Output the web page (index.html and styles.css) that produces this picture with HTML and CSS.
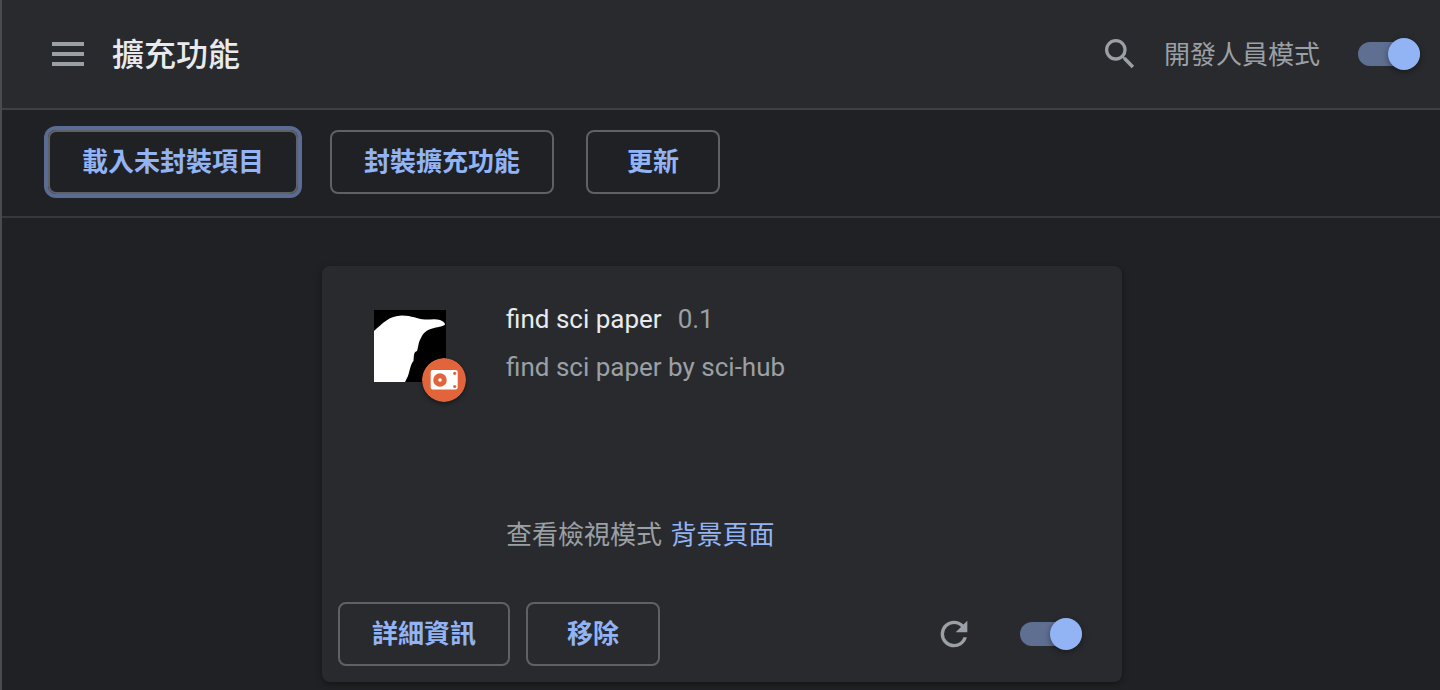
FILE: index.html
```
<!DOCTYPE html>
<html lang="zh-Hant">
<head>
    <meta charset="UTF-8">
    <meta name="viewport" content="width=device-width, initial-scale=1.0">
    <title>擴充功能</title>
    <link rel="stylesheet" href="styles.css">
</head>
<body>

<header class="header">
    <button type="button" class="icon-button" aria-label="主選單">
        <svg class="menu-icon" viewBox="0 0 32 24"><path d="M0 0h32v4H0zM0 10h32v4H0zM0 20h32v4H0z"/></svg>
    </button>
    <h1>擴充功能</h1>
    <button type="button" class="icon-button search" aria-label="搜尋">
        <svg class="icon" viewBox="0 0 24 24"><path d="M15.5 14h-.79l-.28-.27A6.471 6.471 0 0 0 16 9.5 6.5 6.5 0 1 0 9.5 16c1.61 0 3.09-.59 4.23-1.57l.27.28v.79l5 4.99L20.49 19l-4.99-5zm-6 0C7.01 14 5 11.99 5 9.5S7.01 5 9.5 5 14 7.01 14 9.5 11.99 14 9.5 14z"/></svg>
    </button>
    <label class="dev-label" for="devMode">開發人員模式</label>
    <input type="checkbox" class="toggle" id="devMode" checked>
</header>

<div class="toolbar">
    <button type="button" class="button focused">載入未封裝項目</button>
    <button type="button" class="button">封裝擴充功能</button>
    <button type="button" class="button">更新</button>
</div>

<main class="content">
    <section class="card">
        <div class="card-main">
            <div class="logo">
                <svg class="logo-image" viewBox="0 0 72 72">
                    <rect width="72" height="72" fill="#000"/>
                    <path fill="#fff" d="M0 21C8 14 15 5.500 28 5.500C38 5.500 43 9 51 9.500C57 9.500 62 8.500 66 10C69 11 71 13 71 14.500C70 16 65 17 60 18C53 19.500 49 23 47 28C44 33 44.500 37 43 41C40 42 40 44 39.500 51C36 55 36 61 34 66L31 72H0z"/>
                </svg>
                <svg class="badge" viewBox="0 0 44 44">
                    <circle cx="22" cy="22" r="22" fill="#e2643b"/>
                    <rect x="8.700" y="12" width="27" height="19.500" rx="2" fill="#fff"/>
                    <circle cx="18" cy="22" r="4.300" fill="none" stroke="#e2643b" stroke-width="5"/>
                    <circle cx="32.700" cy="15.300" r="1.600" fill="#e2643b"/>
                    <circle cx="32.700" cy="28.500" r="1.600" fill="#e2643b"/>
                </svg>
            </div>
            <div class="info">
                <div class="title-row">
                    <h2>find sci paper</h2>
                    <span>0.1</span>
                </div>
                <p class="description">find sci paper by sci-hub</p>
                <p class="inspect">查看檢視模式 <a href="#">背景頁面</a></p>
            </div>
        </div>
        <div class="card-actions">
            <button type="button" class="button">詳細資訊</button>
            <button type="button" class="button">移除</button>
            <button type="button" class="icon-button reload" aria-label="重新載入">
                <svg class="icon" viewBox="0 0 24 24"><path d="M17.65 6.350A7.958 7.958 0 0 0 12 4a8 8 0 1 0 7.730 10h-2.080A5.990 5.990 0 0 1 12 18a6 6 0 1 1 0-12c1.660 0 3.140.690 4.220 1.780L13 11h7V4z"/></svg>
            </button>
            <input type="checkbox" class="toggle" aria-label="啟用" checked>
        </div>
    </section>
</main>

</body>
</html>
```
FILE: styles.css
```
* {
    box-sizing: border-box;
}
body {
    font-family: Roboto, "Noto Sans CJK TC", sans-serif;
    font-size: 26px;
    line-height: 40px;
    background-color: #202124;
    color: #9aa0a6;
    margin: 0;
    min-height: 100vh;
    border-left: 2px solid #4a4b4e;
}
h1, h2, p {
    margin: 0;
}
h1 {
    font-size: 32px;
    font-weight: 500;
    color: #e8eaed;
    margin-left: 28px;
    padding-top: 2px;
}
h2 {
    font-size: 26px;
    font-weight: 400;
    color: #e8eaed;
}
.header {
    display: flex;
    align-items: center;
    height: 110px;
    padding: 0 20px 0 50px;
    background-color: #292a2d;
    border-bottom: 2px solid #3f4042;
}
.icon-button {
    display: flex;
    padding: 0;
    border: none;
    background: none;
    color: #9aa0a6;
    cursor: pointer;
}
.icon-button svg {
    fill: currentColor;
}
.menu-icon {
    width: 32px;
    height: 24px;
}
.icon {
    width: 40px;
    height: 40px;
}
.search {
    margin-left: auto;
}
.dev-label {
    margin: 0 38px 0 24px;
    padding-top: 2px;
}
.toggle {
    appearance: none;
    display: flex;
    align-items: center;
    justify-content: flex-end;
    width: 62px;
    height: 24px;
    margin: 0;
    border-radius: 12px;
    background-color: #5f6f92;
    cursor: pointer;
}
.toggle::before {
    content: "";
    width: 32px;
    height: 32px;
    flex: none;
    border-radius: 50%;
    background-color: #92b4f4;
    box-shadow: 0 2px 6px rgba(0, 0, 0, 0.4);
}
.toggle:not(:checked) {
    justify-content: flex-start;
}
.toolbar {
    display: flex;
    gap: 32px;
    padding: 20px 46px 22px;
    border-bottom: 2px solid #37383b;
}
.button {
    height: 64px;
    min-width: 134px;
    padding: 0 32px 6px;
    border: 2px solid #5f6164;
    border-radius: 8px;
    background: none;
    color: #92b4f4;
    font-family: inherit;
    font-size: 26px;
    font-weight: 700;
    cursor: pointer;
}
.focused {
    box-shadow: 0 0 0 4px #5a6c93;
}
.content {
    display: flex;
    justify-content: center;
    padding: 48px 0 8px 2px;
}
.card {
    width: 800px;
    padding: 32px 40px 16px 16px;
    border-radius: 8px;
    background-color: #292a2d;
    box-shadow: 0 2px 6px rgba(0, 0, 0, 0.4);
}
.card-main {
    display: flex;
    gap: 60px;
    padding-left: 36px;
}
.logo {
    position: relative;
    width: 72px;
    height: 72px;
    margin-top: 12px;
}
.logo-image {
    display: block;
}
.badge {
    position: absolute;
    right: -20px;
    bottom: -20px;
    width: 44px;
    height: 44px;
    border-radius: 50%;
    box-shadow: 0 2px 4px rgba(0, 0, 0, 0.4);
}
.info {
    padding-top: 1px;
}
.title-row {
    display: flex;
    gap: 16px;
}
.description {
    min-height: 168px;
    margin-top: 8px;
}
.inspect a {
    margin-left: 2px;
    color: #92b4f4;
    text-decoration: none;
}
.card-actions {
    display: flex;
    align-items: center;
    gap: 16px;
    margin-top: 47px;
}
.reload {
    margin: 0 30px 0 auto;
}
```
